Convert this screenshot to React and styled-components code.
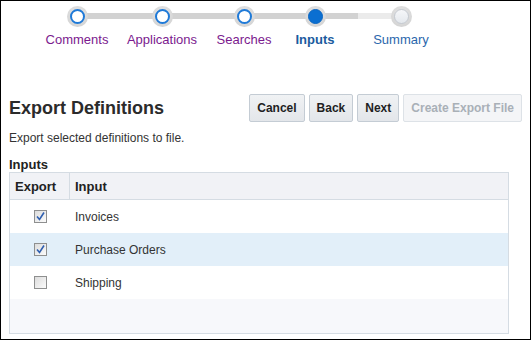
import styled, { createGlobalStyle } from 'styled-components'

const GlobalStyle = createGlobalStyle`
    body {
        margin: 0;
        font-family: "Liberation Sans", Arial, sans-serif;
        color: #333333;
        background: #ffffff;
    }
`

const Frame = styled.div`
    box-sizing: border-box;
    width: 531px;
    height: 340px;
    border: 1px solid #000000;
    overflow: hidden;
`

const Train = styled.div`
    display: flex;
    flex-direction: row;
    padding-top: 5px;
    margin-left: 45px;
`

const Stop = styled.div`
    display: flex;
    flex-direction: column;
    align-items: center;
    width: ${p => p.$width}px;
    flex: none;
`

const TrackRow = styled.div`
    position: relative;
    width: 100%;
    height: 21px;
    display: flex;
    justify-content: center;
    align-items: center;
`

const TrackHalf = styled.div`
    position: absolute;
    top: 7px;
    height: 6px;
    width: 50%;
    ${p => (p.$side === 'left' ? 'left: 0;' : 'right: 0;')}
    background: ${p => (p.$hidden ? 'transparent' : p.$light ? '#ebebeb' : '#d2d2d2')};
`

const Ring = styled.div`
    position: relative;
    box-sizing: border-box;
    width: 21px;
    height: 21px;
    border-radius: 50%;
    background: radial-gradient(circle at 50% 35%, #e6e6e6 0%, #cfcfcf 100%);
    display: flex;
    align-items: center;
    justify-content: center;
`

const Dot = styled.div`
    box-sizing: border-box;
    width: 15px;
    height: 15px;
    border-radius: 50%;
    ${p =>
        p.$state === 'current'
            ? 'background: #0b6fd1; border: 1px solid #0a66c2;'
            : p.$state === 'next'
            ? 'background: linear-gradient(#f6f7f9, #e4e8ed); border: 1px solid #c5cad1;'
            : 'background: #ffffff; border: 2px solid #1f7ad8;'}
`

const StopLabel = styled.div`
    margin-top: 5px;
    font-size: 13px;
    line-height: 15px;
    white-space: nowrap;
    font-weight: ${p => (p.$state === 'current' ? 'bold' : 'normal')};
    color: ${p =>
        p.$state === 'current' ? '#1b5b9e' : p.$state === 'next' ? '#2b67ac' : '#7b1a8e'};
`

const Main = styled.div`
    padding: 0 8px;
    margin-top: 47px;
`

const HeaderRow = styled.div`
    display: flex;
    flex-direction: row;
    justify-content: space-between;
    align-items: center;
    height: 28px;
`

const Title = styled.h1`
    margin: 0;
    font-size: 18px;
    font-weight: bold;
    color: #2b2b2b;
`

const Buttons = styled.div`
    display: flex;
    flex-direction: row;
    gap: 4px;
`

const Button = styled.button`
    box-sizing: border-box;
    height: 28px;
    padding: 0 7px;
    font-family: "Liberation Sans", Arial, sans-serif;
    font-size: 12px;
    font-weight: bold;
    border-radius: 2px;
    border: 1px solid ${p => (p.disabled ? '#dde2e7' : '#c4ccd4')};
    color: ${p => (p.disabled ? '#a9b0b7' : '#1f1f1f')};
    background: ${p => (p.disabled ? '#f4f5f7' : 'linear-gradient(#f0f2f4, #e3e6ea)')};
`

const Description = styled.div`
    margin-top: 9px;
    font-size: 12px;
    line-height: 14px;
`

const SectionLabel = styled.div`
    margin-top: 12px;
    font-size: 13px;
    line-height: 15px;
    font-weight: bold;
    color: #222222;
`

const Table = styled.div`
    width: 500px;
    box-sizing: border-box;
    border: 1px solid #d5dce3;
`

const Row = styled.div`
    display: grid;
    grid-template-columns: 60px 1fr;
    height: ${p => (p.$header ? 26 : 33)}px;
    background: ${p => (p.$header ? '#f1f2f6' : p.$selected ? '#e2eff9' : '#ffffff')};
    border-bottom: ${p => (p.$header ? '1px solid #d5dce3' : 'none')};
    font-size: ${p => (p.$header ? 13 : 12)}px;
    font-weight: ${p => (p.$header ? 'bold' : 'normal')};
    color: ${p => (p.$header ? '#222222' : '#333333')};
`

const Cell = styled.div`
    display: flex;
    align-items: center;
    justify-content: ${p => (p.$center ? 'center' : 'flex-start')};
    padding-left: ${p => (p.$center ? 0 : 5)}px;
    border-right: ${p => (p.$divider ? '1px solid #d5dce3' : 'none')};
`

const HeaderCell = styled(Cell)`
    padding-left: ${p => p.$pad}px;
`

const Filler = styled.div`
    height: 34px;
    background: #f7f8fb;
`

const Box = styled.div`
    box-sizing: border-box;
    width: 13px;
    height: 13px;
    border: 1px solid #8e8f8f;
    background: linear-gradient(135deg, #dcdcdc, #fbfbfb);
    display: flex;
    align-items: center;
    justify-content: center;
`

const Checkbox = ({ checked }) => (
    <Box>
        {checked && (
            <svg width="9" height="9" viewBox="0 0 9 9">
                <path d="M1 4.5 L3.5 7.5 L8 0.5" fill="none" stroke="#2f5fb0" strokeWidth="1.6" />
            </svg>
        )}
    </Box>
)

const stops = [
    { label: 'Comments', width: 62, state: 'visited' },
    { label: 'Applications', width: 108, state: 'visited' },
    { label: 'Searches', width: 56, state: 'visited' },
    { label: 'Inputs', width: 86, state: 'current' },
    { label: 'Summary', width: 86, state: 'next' },
]

const rows = [
    { name: 'Invoices', checked: true },
    { name: 'Purchase Orders', checked: true, selected: true },
    { name: 'Shipping', checked: false },
]

export default function App() {
    return (
        <Frame>
            <GlobalStyle />
            <Train>
                {stops.map((s, i) => (
                    <Stop key={s.label} $width={s.width}>
                        <TrackRow>
                            <TrackHalf $side="left" $hidden={i === 0} $light={s.state === 'next'} />
                            <TrackHalf $side="right" $hidden={i === stops.length - 1} />
                            <Ring>
                                <Dot $state={s.state} />
                            </Ring>
                        </TrackRow>
                        <StopLabel $state={s.state}>{s.label}</StopLabel>
                    </Stop>
                ))}
            </Train>
            <Main>
                <HeaderRow>
                    <Title>Export Definitions</Title>
                    <Buttons>
                        <Button>Cancel</Button>
                        <Button>Back</Button>
                        <Button>Next</Button>
                        <Button disabled>Create Export File</Button>
                    </Buttons>
                </HeaderRow>
                <Description>Export selected definitions to file.</Description>
                <SectionLabel>Inputs</SectionLabel>
                <Table>
                    <Row $header>
                        <HeaderCell $divider $pad={5}>Export</HeaderCell>
                        <HeaderCell $pad={5}>Input</HeaderCell>
                    </Row>
                    {rows.map(r => (
                        <Row key={r.name} $selected={r.selected}>
                            <Cell $center>
                                <Checkbox checked={r.checked} />
                            </Cell>
                            <Cell>{r.name}</Cell>
                        </Row>
                    ))}
                    <Filler />
                </Table>
            </Main>
        </Frame>
    )
}
